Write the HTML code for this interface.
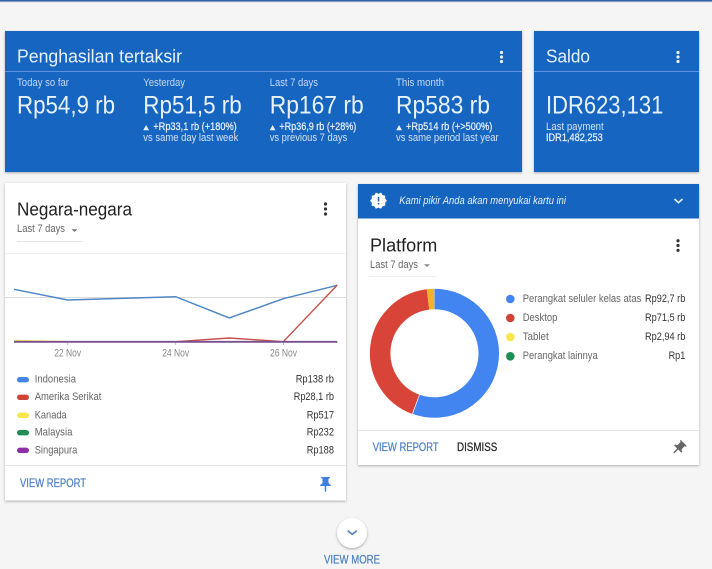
<!DOCTYPE html>
<html>
<head>
<meta charset="utf-8">
<style>
html,body{margin:0;padding:0;background:#f5f5f5;width:712px;height:569px;overflow:hidden}
svg{display:block;filter:blur(.3px)}
text{font-family:"Liberation Sans",sans-serif}
.t{font-size:18.5px;fill:#e8f2fc}
.s{font-size:10.8px;fill:#c6daf3}
.b{font-size:25px;fill:#e8f2fc}
.d{font-size:10.8px;fill:#e6f0fb;stroke:#e6f0fb;stroke-width:.25px}
.v{font-size:10.8px;fill:#d3e3f6}
.h{font-size:18.5px;fill:#212121}
.l{font-size:10.8px;fill:#666}
.m{font-size:10.8px;fill:#333}
.a{font-size:11.6px;fill:#4f82c3;stroke:#4f82c3;stroke-width:.25px}
.x{font-size:10.8px;fill:#8a8a8a}
</style>
</head>
<body>
<svg width="712" height="569" viewBox="0 0 712 569" xmlns="http://www.w3.org/2000/svg">
<defs>
<filter id="sh" x="-5%" y="-5%" width="110%" height="112%"><feDropShadow dx="0" dy="1" stdDeviation="1.4" flood-color="#000" flood-opacity=".3"/></filter>
<filter id="sh2" x="-30%" y="-30%" width="160%" height="170%"><feDropShadow dx="0" dy="1" stdDeviation="1.2" flood-color="#000" flood-opacity=".35"/></filter>
</defs>
<rect width="712" height="569" fill="#f5f5f5"/>
<rect width="712" height="1.5" fill="#2f62a8"/>
<rect y="1.5" width="712" height="1" fill="#d5dbe3"/>

<!-- Earnings -->
<rect x="5" y="31" width="517" height="141" fill="#1565c0" filter="url(#sh)"/>
<rect x="5" y="71" width="517" height="1" fill="#5b93e0"/>
<text class="t" x="17" y="62.7" textLength="165" lengthAdjust="spacingAndGlyphs">Penghasilan tertaksir</text>
<circle cx="501.5" cy="52.5" r="1.6" fill="#eef"/><circle cx="501.5" cy="57" r="1.6" fill="#eef"/><circle cx="501.5" cy="61.5" r="1.6" fill="#eef"/>

<text class="s" x="17" y="86" textLength="52" lengthAdjust="spacingAndGlyphs">Today so far</text>
<text class="b" x="17" y="113.3" textLength="98" lengthAdjust="spacingAndGlyphs">Rp54,9 rb</text>

<text class="s" x="143.3" y="86" textLength="41.7" lengthAdjust="spacingAndGlyphs">Yesterday</text>
<text class="b" x="143.3" y="113.3" textLength="98.4" lengthAdjust="spacingAndGlyphs">Rp51,5 rb</text>
<polygon points="143.2,130.3 149,130.3 146.1,125" fill="#e6f0fb"/>
<text class="d" x="153.3" y="130" textLength="83.4" lengthAdjust="spacingAndGlyphs">+Rp33,1 rb (+180%)</text>
<text class="v" x="143.3" y="141" textLength="95" lengthAdjust="spacingAndGlyphs">vs same day last week</text>

<text class="s" x="269.7" y="86" textLength="48.3" lengthAdjust="spacingAndGlyphs">Last 7 days</text>
<text class="b" x="269.7" y="113.3" textLength="94" lengthAdjust="spacingAndGlyphs">Rp167 rb</text>
<polygon points="269.7,130.3 275.5,130.3 272.6,125" fill="#e6f0fb"/>
<text class="d" x="279.3" y="130" textLength="77" lengthAdjust="spacingAndGlyphs">+Rp36,9 rb (+28%)</text>
<text class="v" x="269.7" y="141" textLength="77.6" lengthAdjust="spacingAndGlyphs">vs previous 7 days</text>

<text class="s" x="396" y="86" textLength="48" lengthAdjust="spacingAndGlyphs">This month</text>
<text class="b" x="396" y="113.3" textLength="94" lengthAdjust="spacingAndGlyphs">Rp583 rb</text>
<polygon points="396.2,130.3 402,130.3 399.1,125" fill="#e6f0fb"/>
<text class="d" x="406" y="130" textLength="86.3" lengthAdjust="spacingAndGlyphs">+Rp514 rb (+&gt;500%)</text>
<text class="v" x="396" y="141" textLength="102.7" lengthAdjust="spacingAndGlyphs">vs same period last year</text>

<!-- Balance -->
<rect x="534" y="31" width="165" height="141" fill="#1565c0" filter="url(#sh)"/>
<rect x="534" y="71" width="165" height="1" fill="#5b93e0"/>
<text class="t" x="546" y="62.7" textLength="44" lengthAdjust="spacingAndGlyphs">Saldo</text>
<circle cx="678" cy="52.5" r="1.6" fill="#eef"/><circle cx="678" cy="57" r="1.6" fill="#eef"/><circle cx="678" cy="61.5" r="1.6" fill="#eef"/>
<text class="b" x="546" y="113.3" textLength="117.3" lengthAdjust="spacingAndGlyphs">IDR623,131</text>
<text class="v" x="546" y="130" textLength="57.7" lengthAdjust="spacingAndGlyphs">Last payment</text>
<text class="d" x="546" y="141" textLength="56.7" lengthAdjust="spacingAndGlyphs">IDR1,482,253</text>

<!-- Countries -->
<rect x="5" y="183" width="341" height="317.5" fill="#fff" filter="url(#sh)"/>
<text class="h" x="17" y="215.7" textLength="115" lengthAdjust="spacingAndGlyphs">Negara-negara</text>
<circle cx="325.5" cy="204" r="1.6" fill="#333"/><circle cx="325.5" cy="209" r="1.6" fill="#333"/><circle cx="325.5" cy="214" r="1.6" fill="#333"/>
<text class="l" x="17" y="232" textLength="48" lengthAdjust="spacingAndGlyphs">Last 7 days</text>
<polygon points="71.5,229.3 77.5,229.3 74.5,232" fill="#777"/>
<rect x="17" y="241" width="66" height="1" fill="#e8e8e8"/>
<rect x="5" y="253" width="341" height="1" fill="#f2f2f2"/>
<rect x="5" y="297" width="341" height="1" fill="#dcdcdc"/>
<rect x="67.2" y="342" width="1" height="3" fill="#bbb"/><rect x="175.2" y="342" width="1" height="3" fill="#bbb"/><rect x="283" y="342" width="1" height="3" fill="#bbb"/>
<polyline points="14,340.5 67.7,341.7" fill="none" stroke="#f4dd5a" stroke-width="1.5"/>
<polyline points="14,289.3 67.7,300 175.7,296.7 229.3,318 283.3,298.7 337.3,285.3" fill="none" stroke="#4f87c4" stroke-width="1.5"/>
<polyline points="14,341.7 175.7,341.7 229.3,338 283.3,341.7 337.3,285" fill="none" stroke="#c8504a" stroke-width="1.4"/>
<line x1="14" y1="341.8" x2="337.3" y2="341.8" stroke="#7a4f8f" stroke-width="1.8"/>
<text class="x" x="54.2" y="356.7" textLength="27" lengthAdjust="spacingAndGlyphs">22 Nov</text>
<text class="x" x="162.2" y="356.7" textLength="27" lengthAdjust="spacingAndGlyphs">24 Nov</text>
<text class="x" x="270" y="356.7" textLength="27" lengthAdjust="spacingAndGlyphs">26 Nov</text>

<rect x="17" y="377" width="12" height="5.4" rx="2.7" fill="#4285e4"/>
<rect x="17" y="394.6" width="12" height="5.4" rx="2.7" fill="#d04437"/>
<rect x="17" y="412.6" width="12" height="5.4" rx="2.7" fill="#fbe54d"/>
<rect x="17" y="430" width="12" height="5.4" rx="2.7" fill="#1e8e55"/>
<rect x="17" y="447.6" width="12" height="5.4" rx="2.7" fill="#8e2fa8"/>
<text class="l" x="34.7" y="382.3" textLength="41.3" lengthAdjust="spacingAndGlyphs">Indonesia</text>
<text class="l" x="34.7" y="400" textLength="66.7" lengthAdjust="spacingAndGlyphs">Amerika Serikat</text>
<text class="l" x="34.7" y="418.3" textLength="32" lengthAdjust="spacingAndGlyphs">Kanada</text>
<text class="l" x="34.7" y="435.3" textLength="37.7" lengthAdjust="spacingAndGlyphs">Malaysia</text>
<text class="l" x="34.7" y="453.3" textLength="42.7" lengthAdjust="spacingAndGlyphs">Singapura</text>
<text class="m" x="295.7" y="382.3" textLength="38.3" lengthAdjust="spacingAndGlyphs">Rp138 rb</text>
<text class="m" x="293.7" y="400" textLength="40.3" lengthAdjust="spacingAndGlyphs">Rp28,1 rb</text>
<text class="m" x="306.7" y="418.3" textLength="27.3" lengthAdjust="spacingAndGlyphs">Rp517</text>
<text class="m" x="306.7" y="435.3" textLength="27.3" lengthAdjust="spacingAndGlyphs">Rp232</text>
<text class="m" x="306.7" y="453.3" textLength="27.3" lengthAdjust="spacingAndGlyphs">Rp188</text>
<rect x="5" y="465" width="341" height="1" fill="#e6e6e6"/>
<text class="a" x="20" y="487" textLength="66" lengthAdjust="spacingAndGlyphs">VIEW REPORT</text>
<g transform="translate(325.5,484.5) scale(.75) translate(-12,-12)"><path fill="#3f7fe0" d="M16 9V4h1c.55 0 1-.45 1-1s-.45-1-1-1H7c-.55 0-1 .45-1 1s.45 1 1 1h1v5c0 1.66-1.34 3-3 3v2h5.97v7l1 1 1-1v-7H19v-2c-1.66 0-3-1.34-3-3z"/></g>

<!-- Platform -->
<rect x="358" y="184" width="341" height="281" fill="#fff" filter="url(#sh)"/>
<rect x="358" y="184" width="341" height="34.5" fill="#1565c0"/>
<g transform="translate(378.5,200.7) scale(.77) translate(-12,-12)"><path fill="#fff" d="M23 12l-2.44-2.78.34-3.68-3.61-.82-1.89-3.18L12 3 8.6 1.54 6.71 4.72l-3.61.81.34 3.68L1 12l2.44 2.78-.34 3.69 3.61.82 1.89 3.18L12 21l3.4 1.46 1.89-3.18 3.61-.82-.34-3.68L23 12zm-10 5h-2v-2h2v2zm0-4h-2V7h2v6z"/></g>
<text x="399.3" y="204" font-size="10.8" font-style="italic" fill="#e6f0fb" textLength="166.7" lengthAdjust="spacingAndGlyphs">Kami pikir Anda akan menyukai kartu ini</text>
<polyline points="674.5,199 678.5,202.7 682.5,199" fill="none" stroke="#e6f0fb" stroke-width="1.6"/>
<text class="h" x="370" y="251.3" textLength="67.3" lengthAdjust="spacingAndGlyphs">Platform</text>
<circle cx="678" cy="240.7" r="1.6" fill="#333"/><circle cx="678" cy="245.5" r="1.6" fill="#333"/><circle cx="678" cy="250.3" r="1.6" fill="#333"/>
<text class="l" x="370" y="268" textLength="48" lengthAdjust="spacingAndGlyphs">Last 7 days</text>
<polygon points="424,264.3 430,264.3 427,267" fill="#888"/>
<rect x="369" y="276" width="67" height="1" fill="#eee"/>

<g fill="none" stroke-width="20.5">
<path stroke="#4285f0" d="M434.5 299.05 A54.25 54.25 0 1 1 416.3 404.4"/>
<path stroke="#d84437" d="M415.6 404.2 A54.25 54.25 0 0 1 428 299.45"/>
<path stroke="#f0b429" d="M428.1 299.45 A54.25 54.25 0 0 1 434.2 299.05"/>
</g>
<circle cx="510.3" cy="299" r="4.3" fill="#4285f0"/>
<circle cx="510.3" cy="318" r="4.3" fill="#d04437"/>
<circle cx="510.3" cy="337" r="4.3" fill="#fbe54d"/>
<circle cx="510.3" cy="356.3" r="4.3" fill="#1e8e55"/>
<text class="l" x="522.7" y="302" textLength="118.7" lengthAdjust="spacingAndGlyphs">Perangkat seluler kelas atas</text>
<text class="l" x="522.7" y="321" textLength="34.7" lengthAdjust="spacingAndGlyphs">Desktop</text>
<text class="l" x="522.7" y="340" textLength="26" lengthAdjust="spacingAndGlyphs">Tablet</text>
<text class="l" x="522.7" y="359" textLength="75" lengthAdjust="spacingAndGlyphs">Perangkat lainnya</text>
<text class="m" x="645" y="302" textLength="40.3" lengthAdjust="spacingAndGlyphs">Rp92,7 rb</text>
<text class="m" x="645" y="321" textLength="40.3" lengthAdjust="spacingAndGlyphs">Rp71,5 rb</text>
<text class="m" x="645" y="340" textLength="40.3" lengthAdjust="spacingAndGlyphs">Rp2,94 rb</text>
<text class="m" x="668.6" y="359" textLength="16.7" lengthAdjust="spacingAndGlyphs">Rp1</text>
<rect x="358" y="430" width="341" height="1" fill="#e6e6e6"/>
<text class="a" x="372.7" y="451" textLength="66" lengthAdjust="spacingAndGlyphs">VIEW REPORT</text>
<text class="a" x="457" y="451" textLength="40.3" lengthAdjust="spacingAndGlyphs" style="fill:#262626;stroke:#262626">DISMISS</text>
<g transform="translate(678.7,448) rotate(45) scale(.72) translate(-12,-12)"><path fill="#666" d="M16 9V4h1c.55 0 1-.45 1-1s-.45-1-1-1H7c-.55 0-1 .45-1 1s.45 1 1 1h1v5c0 1.66-1.34 3-3 3v2h5.97v7l1 1 1-1v-7H19v-2c-1.66 0-3-1.34-3-3z"/></g>

<!-- View more -->
<circle cx="352" cy="533" r="15" fill="#fff" filter="url(#sh2)"/>
<polyline points="347.7,530.8 352.2,534.4 356.7,530.8" fill="none" stroke="#4f7fb8" stroke-width="1.6"/>
<text class="a" x="324" y="563.5" textLength="56" lengthAdjust="spacingAndGlyphs">VIEW MORE</text>
</svg>
</body>
</html>
